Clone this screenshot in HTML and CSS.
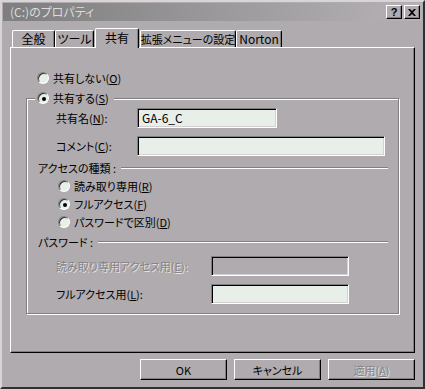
FILE: index.html
```html
<!DOCTYPE html>
<html lang="ja">
<head>
    <meta charset="UTF-8">
    <title>(C:)のプロパティ</title>
    <link rel="stylesheet" href="styles.css">
</head>
<body>
    <div class="window">
        <div class="titlebar">
            <span class="title">(C:)のプロパティ</span>
            <div class="title-buttons">
                <span class="tbtn tbtn-help">?</span>
                <span class="tbtn">
                    <svg width="8" height="7" viewBox="0 0 8 7"><path d="M0 0h2l2 2 2-2h2L5 3.5 8 7H6L4 5 2 7H0l3-3.5z" fill="#000"/></svg>
                </span>
            </div>
        </div>

        <div class="tabs">
            <div class="tab tab-general">全般</div>
            <div class="tab tab-tools">ツール</div>
            <div class="tab tab-share active">共有</div>
            <div class="tab tab-menu">拡張メニューの設定</div>
            <div class="tab tab-norton">Norton</div>
        </div>

        <div class="panel">
            <div class="radio-row top-radio"><span class="radio"></span><span>共有しない(<u>O</u>)</span></div>

            <div class="group">
                <div class="group-head radio-row"><span class="radio checked"></span><span>共有する(<u>S</u>)</span></div>

                <div class="field field-first">
                    <span class="field-label">共有名(<u>N</u>):</span>
                    <div class="input input-name">GA-6_C</div>
                </div>
                <div class="field">
                    <span class="field-label">コメント(<u>C</u>):</span>
                    <div class="input input-comment"></div>
                </div>

                <div class="section section-access"><span>アクセスの種類 :</span><span class="rule"></span></div>
                <div class="radio-row sub-radio"><span class="radio"></span><span>読み取り専用(<u>R</u>)</span></div>
                <div class="radio-row sub-radio"><span class="radio checked"></span><span>フルアクセス(<u>F</u>)</span></div>
                <div class="radio-row sub-radio"><span class="radio"></span><span>パスワードで区別(<u>D</u>)</span></div>

                <div class="section section-pass"><span>パスワード :</span><span class="rule"></span></div>
                <div class="field field-pw-first">
                    <span class="field-label wide disabled">読み取り専用アクセス用(<u>E</u>):</span>
                    <div class="input input-pw input-disabled"></div>
                </div>
                <div class="field">
                    <span class="field-label wide">フルアクセス用(<u>L</u>):</span>
                    <div class="input input-pw"></div>
                </div>
            </div>
        </div>

        <div class="actions">
            <button class="btn">OK</button>
            <button class="btn">キャンセル</button>
            <button class="btn disabled">適用(<u>A</u>)</button>
        </div>
    </div>
</body>
</html>
```

FILE: styles.css
```css
 body {
     margin: 0;
     background: #afabae;
     font-family: "Noto Sans CJK JP", "Liberation Sans", sans-serif;
     font-size: 11px;
     font-feature-settings: "palt";
     color: #000;
 }
 u {
     text-decoration: underline;
     text-underline-offset: 1px;
 }
 .window {
     width: 425px;
     height: 389px;
     box-sizing: border-box;
     border: 2px solid;
     border-color: #d8d4d8 #303030 #303030 #d8d4d8;
     padding: 1px;
     background: #afabae;
 }
 .titlebar {
     height: 18px;
     display: flex;
     align-items: center;
     justify-content: space-between;
     padding: 0 2px 0 7px;
     background: linear-gradient(to right, #7e7e7e, #b6b2b6);
 }
 .title {
     color: #dcdcdc;
     line-height: 16px;
     font-size: 12px;
 }
 .title-buttons {
     display: flex;
     gap: 2px;
 }
 .tbtn {
     width: 16px;
     height: 14px;
     box-sizing: border-box;
     display: flex;
     align-items: center;
     justify-content: center;
     background: #afabae;
     border: 1px solid;
     border-color: #fff #000 #000 #fff;
     box-shadow: inset -1px -1px 0 #808080;
 }
 .tbtn-help {
     font-family: "Liberation Sans", sans-serif;
     font-weight: bold;
     font-size: 11px;
     line-height: 12px;
 }

 /* tabs */
 .tabs {
     display: flex;
     align-items: flex-end;
     height: 19px;
     margin-top: 7px;
     padding-left: 9px;
 }
 .tab {
     height: 17px;
     box-sizing: border-box;
     display: flex;
     align-items: center;
     justify-content: center;
     white-space: nowrap;
     font-size: 12px;
     border: 1px solid;
     border-bottom: none;
     border-color: #fff #000 #000 #fff;
     border-radius: 2px 2px 0 0;
     box-shadow: inset -1px 0 0 #808080;
     line-height: 14px;
 }
 .tab-general { width: 43px; }
 .tab-tools { width: 39px; }
 .tab-share { width: 44px; }
 .tab-menu { width: 96px; font-size: 11px; }
 .tab-norton { width: 46px; }
 .tab.active {
     height: 20px;
     margin: 0 1px -1px 1px;
     background: #afabae;
     position: relative;
     z-index: 1;
     padding-bottom: 2px;
 }

 /* panel */
 .panel {
     height: 306px;
     box-sizing: border-box;
     margin: 0 7px;
     border: 1px solid;
     border-color: #fff #000 #000 #fff;
     box-shadow: inset -1px -1px 0 #808080;
     padding: 0 15px;
 }
 .radio-row {
     display: flex;
     align-items: center;
     gap: 4px;
     height: 16px;
     line-height: 16px;
 }
 .top-radio {
     margin-top: 22px;
     padding-left: 11px;
 }
 .radio {
     width: 12px;
     height: 12px;
     box-sizing: border-box;
     border-radius: 50%;
     border: 1px solid;
     border-color: #808080 #fff #fff #808080;
     box-shadow: inset 1px 1px 0 #303030;
     background: #e8eee8;
     display: flex;
     align-items: center;
     justify-content: center;
     flex: none;
 }
 .radio.checked::after {
     content: "";
     width: 4px;
     height: 4px;
     border-radius: 50%;
     background: #000;
     margin: 1px 0 0 1px;
 }

 .group {
     margin-top: 12px;
     height: 216px;
     box-sizing: border-box;
     border: 1px solid #808080;
     box-shadow: 1px 1px 0 #fff, inset 1px 1px 0 #fff;
     padding: 0 10px 0 12px;
 }
 .group-head {
     width: fit-content;
     margin: -9px 0 0 -4px;
     padding: 0 5px 0 2px;
     background: #afabae;
 }
 .field {
     display: flex;
     align-items: center;
     margin-top: 8px;
     padding-left: 17px;
 }
 .field-first {
     margin-top: 2px;
 }
 .field-pw-first {
     margin-top: 6px;
 }
 .field-label {
     width: 81px;
     flex: none;
 }
 .field-label.wide {
     width: 155px;
 }
 .disabled {
     color: #868486;
     text-shadow: 1px 1px 0 #e4e4e4;
 }
 .input {
     height: 20px;
     box-sizing: border-box;
     border: 1px solid;
     border-color: #808080 #fff #fff #808080;
     box-shadow: inset 1px 1px 0 #000, inset -1px -1px 0 #d4d0d4;
     background: #e8eee8;
     padding: 0 4px;
     line-height: 18px;
     font-size: 12px;
 }
 .input-name { width: 140px; }
 .input-comment { width: 248px; }
 .input-pw { width: 138px; }
 .input-disabled {
     background: #afabae;
 }

 .section {
     display: flex;
     align-items: center;
     gap: 5px;
     height: 16px;
     margin-left: -1px;
 }
 .section-access {
     margin-top: 4px;
 }
 .section-pass {
     margin-top: 3px;
 }
 .rule {
     flex: 1;
     border-top: 1px solid #808080;
     border-bottom: 1px solid #fff;
 }
 .sub-radio {
     height: 18px;
     padding-left: 19px;
 }
 .section-access + .sub-radio {
     margin-top: 1px;
 }

 /* buttons */
 .actions {
     display: flex;
     justify-content: flex-end;
     gap: 7px;
     margin-top: 6px;
     padding-right: 7px;
 }
 .btn {
     width: 87px;
     height: 21px;
     box-sizing: border-box;
     padding: 0;
     font: inherit;
     background: #afabae;
     border: 1px solid;
     border-color: #fff #000 #000 #fff;
     box-shadow: inset -1px -1px 0 #808080;
     color: #000;
 }
 .btn.disabled {
     color: #868486;
     text-shadow: 1px 1px 0 #e4e4e4;
 }
```
